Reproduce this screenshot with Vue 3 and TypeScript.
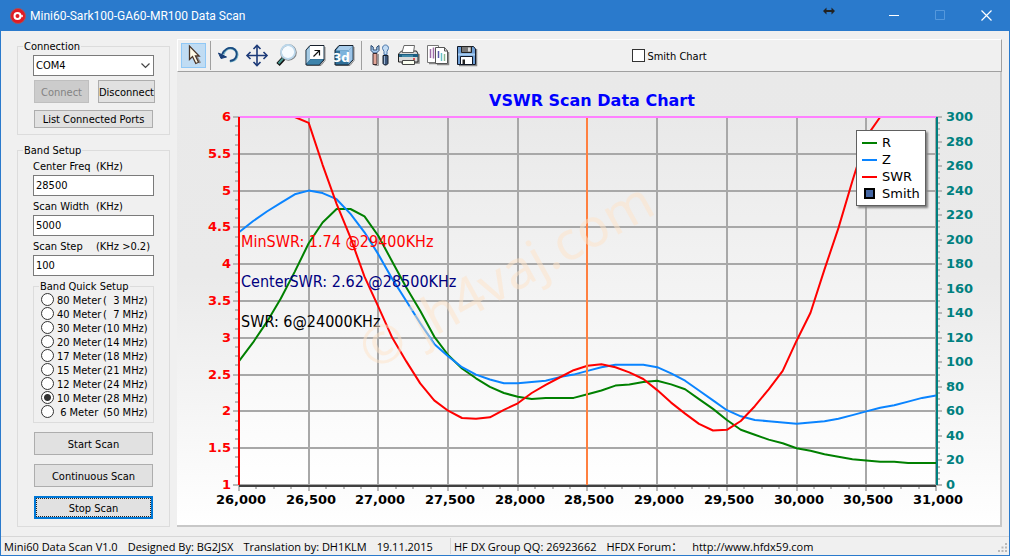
<script setup lang="ts">
import { computed, onBeforeUnmount, onMounted, ref } from 'vue'

interface Band {
  id: string
  name: string
  range: string
}

const port = ref('COM4')
const centerFreq = ref('28500')
const scanWidth = ref('5000')
const scanStep = ref('100')
const band = ref('10')
const smith = ref(false)

const bands: Band[] = [
  { id: '80', name: '80 Meter', range: '(  3 MHz)' },
  { id: '40', name: '40 Meter', range: '(  7 MHz)' },
  { id: '30', name: '30 Meter', range: '(10 MHz)' },
  { id: '20', name: '20 Meter', range: '(14 MHz)' },
  { id: '17', name: '17 Meter', range: '(18 MHz)' },
  { id: '15', name: '15 Meter', range: '(21 MHz)' },
  { id: '12', name: '12 Meter', range: '(24 MHz)' },
  { id: '10', name: '10 Meter', range: '(28 MHz)' },
  { id: '6', name: ' 6 Meter', range: '(50 MHz)' },
]

// One sample every 100 kHz, starting at 26,000 kHz.
const r = [
  101, 116, 133, 152, 174, 197, 214, 225, 225, 219, 203, 182, 161, 142, 121, 106, 95, 87, 80, 75, 72, 70, 71, 71, 71, 74,
  77, 81, 82, 84, 85, 82, 78, 70, 62, 53, 45, 41, 37, 34, 30, 28, 25, 23, 21, 20, 19, 19, 18, 18, 18,
]
const z = [
  206, 215, 223, 230, 237, 240, 238, 233, 221, 206, 188, 168, 150, 132, 115, 105, 96, 90, 86, 83, 83, 84, 85, 88, 90, 93,
  96, 98, 98, 98, 96, 91, 85, 77, 69, 61, 56, 53, 52, 51, 50, 51, 52, 54, 57, 60, 63, 65, 68, 71, 73,
]
const swrStart = 4
const swr = [
  6, 5.92, 5.35, 4.82, 4.36, 3.83, 3.42, 3, 2.68, 2.38, 2.15, 2.01, 1.91, 1.9, 1.92, 2.02, 2.11, 2.25, 2.36, 2.46, 2.56,
  2.62, 2.64, 2.6, 2.53, 2.44, 2.29, 2.12, 1.97, 1.83, 1.74, 1.75, 1.87, 2.07, 2.3, 2.55, 2.96, 3.34, 3.93, 4.49, 5.13,
  5.73, 6,
]

const chart = ref<SVGSVGElement | null>(null)
const size = ref({ w: 823, h: 453 })
let observer: ResizeObserver | undefined

onMounted(() => {
  const el = chart.value
  if (!el) return
  const measure = () => {
    const box = el.getBoundingClientRect()
    size.value = { w: Math.round(box.width), h: Math.round(box.height) }
  }
  measure()
  observer = new ResizeObserver(measure)
  observer.observe(el)
})
onBeforeUnmount(() => observer?.disconnect())

const area = computed(() => ({ l: 62, t: 45, r: size.value.w - 64, b: size.value.h - 40 }))
const px = (f: number) => area.value.l + f * (area.value.r - area.value.l)
const py = (f: number) => area.value.b - f * (area.value.b - area.value.t)
const column = (f: number) => Math.ceil(px(f) - 0.5)

const line = (values: number[], start: number, min: number, max: number) =>
  values
    .map((v, i) => `${px((i + start) / 50).toFixed(1)},${py((v - min) / (max - min)).toFixed(1)}`)
    .join(' ')

const rLine = computed(() => line(r, 0, 0, 300))
const zLine = computed(() => line(z, 0, 0, 300))
const swrLine = computed(() => line(swr, swrStart, 1, 6))

const xTicks = computed(() =>
  Array.from({ length: 41 }, (_, i) => ({
    at: column(i / 40),
    major: i % 4 === 0,
    text: (26000 + i * 125).toLocaleString('en-US'),
  })),
)
const leftTicks = computed(() =>
  Array.from({ length: 41 }, (_, i) => ({
    at: Math.round(py(i / 40)),
    major: i % 4 === 0,
    text: String(1 + i / 8),
  })),
)
const rightTicks = computed(() =>
  Array.from({ length: 61 }, (_, i) => ({
    at: Math.round(py(i / 60)),
    major: i % 4 === 0,
    text: String(i * 5),
  })),
)
const major = <T extends { major: boolean }>(ticks: T[]) => ticks.filter((t) => t.major)
const watermark = computed(() => {
  const x = Math.round(px(0.385))
  const y = Math.round(py(0.565))
  return `translate(${x} ${y}) rotate(-29)`
})
</script>

<template>
  <div class="window">
    <header class="titlebar">
      <svg class="app-icon" width="16" height="16" viewBox="0 0 16 16" aria-hidden="true">
        <circle cx="8" cy="8" r="7.5" fill="#e01b24" stroke="#a5545c" />
        <circle cx="7.5" cy="8" r="3" fill="none" stroke="#fff" stroke-width="2" />
        <path d="M10 8h3M12 6.8v2.4" stroke="#fff" stroke-width="1" />
      </svg>
      <h1>Mini60-Sark100-GA60-MR100 Data Scan</h1>
      <svg class="resize-arrow" width="12" height="8" viewBox="0 0 12 8" aria-hidden="true">
        <path d="M0 4 3.5.5V3h5V.5L12 4 8.5 7.5V5h-5v2.5z" fill="#222" />
      </svg>
      <button type="button" aria-label="Minimize">
        <svg width="11" height="11" viewBox="0 0 11 11"><path d="M0 5.5h10" stroke="#fff" /></svg>
      </button>
      <button type="button" aria-label="Maximize" disabled>
        <svg width="11" height="11" viewBox="0 0 11 11"><path d="M.5.5h9v9h-9z" fill="none" stroke="#5598dc" /></svg>
      </button>
      <button type="button" aria-label="Close">
        <svg width="11" height="11" viewBox="0 0 11 11"><path d="m.5.5 10 10m0-10-10 10" stroke="#fff" stroke-width="1.2" /></svg>
      </button>
    </header>

    <main>
      <aside>
        <fieldset>
          <legend>Connection</legend>
          <div class="group-body connection">
            <div class="select">
              <select v-model="port" aria-label="Port">
                <option>COM4</option>
              </select>
              <svg width="9" height="6" viewBox="0 0 9 6" aria-hidden="true">
                <path d="m.5.5 4 4 4-4" fill="none" stroke="#444" stroke-width="1.2" />
              </svg>
            </div>
            <div class="pair">
              <button type="button" class="btn connect" disabled>Connect</button>
              <button type="button" class="btn disconnect">Disconnect</button>
            </div>
            <button type="button" class="btn list">List Connected Ports</button>
          </div>
        </fieldset>

        <fieldset>
          <legend>Band Setup</legend>
          <div class="group-body">
            <label class="field">
              <span>Center Freq</span><span>(KHz)</span>
              <input v-model="centerFreq" type="text" />
            </label>
            <label class="field">
              <span>Scan Width</span><span>(KHz)</span>
              <input v-model="scanWidth" type="text" />
            </label>
            <label class="field">
              <span>Scan Step</span><span>(KHz &gt;0.2)</span>
              <input v-model="scanStep" type="text" />
            </label>
            <fieldset class="quick">
              <legend>Band Quick Setup</legend>
              <label v-for="b in bands" :key="b.id" class="band">
                <input v-model="band" type="radio" name="band" :value="b.id" />
                <span>{{ b.name }}</span>
                <span>{{ b.range }}</span>
              </label>
            </fieldset>
            <div class="actions">
              <button type="button" class="btn">Start Scan</button>
              <button type="button" class="btn">Continuous Scan</button>
              <button type="button" class="btn focused">Stop Scan</button>
            </div>
          </div>
        </fieldset>
      </aside>

      <section class="work">
        <div class="toolbar" role="toolbar" aria-label="Chart tools">
          <button type="button" class="tool active" aria-label="Select">
            <svg viewBox="0 0 25 25">
              <path d="M15 14l3.500 6.500 1.500-1-3-5.500z" fill="#8c8c90" />
              <path d="M8.500 3v13.500l3-3 3.300 7 2.700-1.200-3-6.300h3.700z" fill="#fffbe8" stroke="#4a3528" stroke-width="1.300" />
            </svg>
          </button>
          <span class="sep"></span>
          <button type="button" class="tool" aria-label="Undo">
            <svg viewBox="0 0 25 25">
              <path d="M7 11.500C9 6.500 13 4.500 17 5.700c3.700 1.300 5.200 5.200 3.500 8.800-1.300 2.400-3.500 3.700-6.500 3.700" fill="none" stroke="#6fb0c4" stroke-width="2.600" />
              <path d="M6 11.500C8 6.200 12.500 4 16.500 5.200c3.800 1.300 5.200 5.300 3.600 8.800-1.300 2.500-3.500 3.800-6.300 3.800" fill="none" stroke="#1b4a80" stroke-width="1.800" />
              <path d="M2.500 10 10.500 14 5 15.500z" fill="#1b3f78" stroke="#1b3f78" />
            </svg>
          </button>
          <button type="button" class="tool" aria-label="Move">
            <svg viewBox="0 0 25 25">
              <path d="M12 3v19M2.500 12.500h19" stroke="#1c3a78" stroke-width="1.600" />
              <path d="m8.500 6 3.500-3.500L15.500 6m-7 13 3.500 3.500 3.500-3.500M5.500 9 2 12.500 5.500 16m13-7 3.500 3.500-3.500 3.500" fill="none" stroke="#1c3a78" stroke-width="1.600" />
            </svg>
          </button>
          <button type="button" class="tool" aria-label="Zoom">
            <svg viewBox="0 0 25 25">
              <path d="m10 15-6 6.500" stroke="#111" stroke-width="4.500" />
              <path d="m9 15.500-4.500 5" stroke="#4c9a94" stroke-width="2" />
              <circle cx="14.500" cy="9.500" r="7.500" fill="#f6fbff" stroke="#808488" stroke-width="1.600" />
              <circle cx="14" cy="9" r="7" fill="none" stroke="#bcd8ec" stroke-width="1.800" />
            </svg>
          </button>
          <button type="button" class="tool" aria-label="Depth">
            <svg viewBox="0 0 25 25">
              <path d="M4 22.500h14l4-5V4" fill="none" stroke="#888" />
              <path d="M7 2.500 3 7v15h13.500l4.500-5V2.500z" fill="#2d6488" stroke="#17202c" />
              <path d="M3.500 7 7 3.500v13l-3.500 4z" fill="#a7cbe4" />
              <path d="M3.500 21.500 7.500 16.500h12.500l-4 5z" fill="#3e84ac" />
              <path d="M7 3h13.500v13H7z" fill="#fff" />
              <path d="M10.500 13.500 16 8M11.500 7.500h5v5" fill="none" stroke="#111" stroke-width="1.200" />
            </svg>
          </button>
          <button type="button" class="tool" aria-label="3D view">
            <svg viewBox="0 0 25 25">
              <path d="M4 22.500h14l4-5V4" fill="none" stroke="#888" />
              <path d="M7 2.500 3 7v15h13.500l4.500-5V2.500z" fill="#2f6f98" stroke="#17202c" />
              <path d="M7.500 3h13l-4 4.500H4z" fill="#a9cdec" />
              <path d="M8 7.500h8.500v9H8z" fill="#7db3dc" />
              <path d="M20.500 3v13.500l-4 4.500V7.500z" fill="#9cc4e8" />
              <text x="1" y="19" class="badge">3d</text>
            </svg>
          </button>
          <span class="sep"></span>
          <button type="button" class="tool" aria-label="Options">
            <svg viewBox="0 0 25 25">
              <path d="M4 2.500v5L6.500 10h3L12 7.500v-5L9.800 4v3H6.200V4z" fill="#a9cdf0" stroke="#27466e" />
              <path d="M6 10.500h4v11H6z" fill="#e2a596" stroke="#3c2c30" />
              <path d="M11.500 11v11.500h-4" fill="none" stroke="#999" />
              <path d="M18.500 2c2 0 3 1.500 3 3.500l-1.500 3v3h-3v-3l-1.500-3c0-2 1-3.500 3-3.500z" fill="#c3dcf4" stroke="#4a75a8" />
              <path d="M16 12.500h5v8l-1.500 1.500h-2L16 20.500z" fill="#3d577c" stroke="#18202c" />
              <path d="M17.500 13v8" stroke="#9ab4d2" />
            </svg>
          </button>
          <button type="button" class="tool" aria-label="Print">
            <svg viewBox="0 0 25 25">
              <path d="M5 20h18v-9" fill="none" stroke="#888" stroke-width="1.500" />
              <path d="M2.500 11 5.500 8h15l1.500 3v8h-19.500z" fill="#d9d9d9" stroke="#222" />
              <path d="M6 9.500 8 2.500h10.500l-1 7z" fill="#fff" stroke="#666" />
              <path d="M3 12.500h19" stroke="#1c5d80" stroke-width="3" />
              <path d="M6 13h11" stroke="#63b4cf" />
              <path d="M6.500 17.500h12v4h-12z" fill="#fafff0" stroke="#444" />
              <path d="M17 16h2" stroke="#d22" stroke-width="1.500" />
            </svg>
          </button>
          <button type="button" class="tool" aria-label="Pages">
            <svg viewBox="0 0 25 25">
              <path d="M4 20.500h8M23.500 9v12.500H12" fill="none" stroke="#888" stroke-width="1.500" />
              <path d="M2.500 2.500h11v17h-11z" fill="#fff" stroke="#777" />
              <path d="M5.500 6v9M8.500 4.500v11" stroke="#a06ca8" stroke-width="1.500" />
              <path d="M10.500 4.500h9l3 3.500v12.500h-12z" fill="#fff" stroke="#555" />
              <path d="M19.500 4.500V8h3" fill="none" stroke="#555" />
              <path d="M13.500 8v7" stroke="#5a58a8" stroke-width="1.500" />
              <path d="M16.500 10v8" stroke="#67c0c8" stroke-width="1.500" />
              <path d="M19.500 11v7" stroke="#8cb890" stroke-width="1.500" />
            </svg>
          </button>
          <button type="button" class="tool" aria-label="Save">
            <svg viewBox="0 0 25 25">
              <path d="M5 22.500h17.500V6" fill="none" stroke="#888" stroke-width="1.500" />
              <path d="M3.500 3.500h16L21.500 6v15.500h-18z" fill="#6f9fd6" stroke="#101828" />
              <path d="M4 11.500h17" stroke="#a9cdf0" stroke-width="2" />
              <path d="M7.500 3.500h10v6h-10z" fill="#777" stroke="#222" />
              <path d="M14 4.500h2.500v4H14z" fill="#ddd" />
              <path d="M6.500 13.500h12v8h-12z" fill="#fff" stroke="#101828" />
              <path d="M8.500 16.500h2.500v4.500H8.500z" fill="#222" />
            </svg>
          </button>
          <label class="smith">
            <input v-model="smith" type="checkbox" />
            <span>Smith Chart</span>
          </label>
        </div>

        <div class="plot">
          <svg ref="chart" class="chart" role="img" aria-label="VSWR Scan Data Chart">
            <defs>
              <linearGradient id="wall" x1="0" y1="0" x2="0" y2="1">
                <stop offset="0" stop-color="#e9e9e9" />
                <stop offset="1" stop-color="#ffffff" />
              </linearGradient>
            </defs>
            <rect :x="area.l" :y="area.t" :width="area.r - area.l" :height="area.b - area.t" fill="url(#wall)" />
            <text class="title" :x="Math.round(size.w / 2) + 3" y="34">VSWR Scan Data Chart</text>

            <g stroke="#a8a8a8" stroke-width="2">
              <line v-for="t in major(xTicks)" :key="`gx${t.at}`" :x1="t.at" :x2="t.at" :y1="area.t" :y2="area.b" />
              <line v-for="t in major(leftTicks)" :key="`gy${t.at}`" :x1="area.l" :x2="area.r" :y1="t.at" :y2="t.at" />
            </g>
            <g stroke="#b8b8b8" stroke-width="2">
              <line v-for="t in xTicks" :key="`tx${t.at}`" :x1="t.at" :x2="t.at" :y1="area.b" :y2="area.b + (t.major ? 6 : 4)" />
              <line v-for="t in leftTicks" :key="`tl${t.at}`" :x1="area.l - (t.major ? 6 : 4)" :x2="area.l" :y1="t.at" :y2="t.at" />
              <line v-for="t in rightTicks" :key="`tr${t.at}`" :x1="area.r" :x2="area.r + (t.major ? 6 : 4)" :y1="t.at" :y2="t.at" />
            </g>

            <g fill="none" stroke-width="2" stroke-linejoin="round">
              <polyline :points="rLine" stroke="#008000" />
              <polyline :points="zLine" stroke="#0a84ff" />
              <polyline :points="swrLine" stroke="#ff0000" />
            </g>

            <g stroke-width="2">
              <line :x1="area.l" :x2="area.r" :y1="area.b + 1" :y2="area.b + 1" stroke="#404040" />
              <line :x1="column(0.5)" :x2="column(0.5)" :y1="area.t" :y2="area.b" stroke="#ff8040" />
              <line :x1="area.l" :x2="area.r" :y1="area.t" :y2="area.t" stroke="#ff80ff" />
              <line :x1="area.l" :x2="area.l" :y1="area.t" :y2="area.b" stroke="#ff0000" />
              <line :x1="area.r + 1" :x2="area.r + 1" :y1="area.t" :y2="area.b" stroke="#008080" />
            </g>

            <text v-for="t in major(xTicks)" :key="`lx${t.at}`" class="tick mid" :x="t.at + 2" :y="area.b + 19">{{ t.text }}</text>
            <text v-for="t in major(leftTicks)" :key="`ll${t.at}`" class="tick left" :x="area.l - 8" :y="t.at + 4">{{ t.text }}</text>
            <text v-for="t in major(rightTicks)" :key="`lr${t.at}`" class="tick right" :x="area.r + 10" :y="t.at + 4">{{ t.text }}</text>

            <text class="note min" :x="area.l + 2" :y="area.t + 130">MinSWR: 1.74 @29400KHz</text>
            <text class="note center" :x="area.l + 2" :y="area.t + 170">CenterSWR: 2.62 @28500KHz</text>
            <text class="note" :x="area.l + 2" :y="area.t + 210">SWR: 6@24000KHz</text>

            <text class="watermark" :transform="watermark" y="17">© jh4vaj.com</text>
          </svg>

          <ul class="key">
            <li><i class="stroke r"></i>R</li>
            <li><i class="stroke z"></i>Z</li>
            <li><i class="stroke swr"></i>SWR</li>
            <li><i class="box"></i>Smith</li>
          </ul>
        </div>
      </section>
    </main>

    <footer>
      <p class="about">
        <span>Mini60 Data Scan V1.0</span>
        <span>Designed By: BG2JSX</span>
        <span>Translation by: DH1KLM</span>
        <span>19.11.2015</span>
      </p>
      <p class="contact">
        <span>HF DX Group QQ: 26923662</span>
        <span>HFDX Forum：</span>
        <span>http://www.hfdx59.com</span>
      </p>
      <svg class="grip" width="10" height="10" viewBox="0 0 10 10" aria-hidden="true">
        <path d="M7 0h2v2H7zM3.500 3.500h2v2h-2zM7 3.500h2v2H7zM0 7h2v2H0zM3.500 7h2v2h-2zM7 7h2v2H7z" fill="#b8b8b8" />
      </svg>
    </footer>
  </div>
</template>

<style>
body {
  background: #f0f0f0;
}
</style>

<style scoped>
.window {
  box-sizing: border-box;
  display: flex;
  flex-direction: column;
  min-height: 100vh;
  border: 1px solid #2a7acc;
  border-top: 0;
  background: #f0f0f0;
  color: #000;
  font: 11px/14px 'DejaVu Sans Condensed', 'DejaVu Sans', sans-serif;
}

button,
input,
select {
  box-sizing: border-box;
  margin: 0;
  font: inherit;
  color: inherit;
}

/* Title bar */
.titlebar {
  display: flex;
  align-items: center;
  height: 31px;
  padding-left: 9px;
  background: #2a7acc;
  color: #fff;
}
.titlebar h1 {
  flex: 1;
  margin: 0 0 0 4px;
  font: 12px/16px Roboto, 'Open Sans', sans-serif;
}
.resize-arrow {
  align-self: flex-start;
  margin: 7px 36px 0 0;
}
.titlebar button {
  display: flex;
  align-items: center;
  justify-content: center;
  width: 46px;
  height: 31px;
  padding: 0;
  border: 0;
  background: none;
}

main {
  display: flex;
  flex: 1;
  padding: 8px 7px 9px 16px;
}
aside {
  display: flex;
  flex-direction: column;
  gap: 8px;
  width: 153px;
  margin-right: 7px;
}
fieldset {
  min-width: 0;
  margin: 0;
  padding: 0;
  border: 1px solid #dcdcdc;
}
legend {
  height: 14px;
  margin-left: 5px;
  padding: 0 1px;
  line-height: 16px;
}
.group-body {
  display: flex;
  flex-direction: column;
  gap: 3px;
  padding: 2px 15px 7px;
}
.connection {
  padding-bottom: 6px;
  gap: 0;
}

.select {
  position: relative;
}
.select select {
  display: block;
  width: 100%;
  height: 21px;
  padding: 0 2px;
  border: 1px solid #7a7a7a;
  border-radius: 0;
  background: #fff;
  appearance: none;
}
.select svg {
  position: absolute;
  top: 8px;
  right: 4px;
  pointer-events: none;
}

.btn {
  height: 23px;
  padding: 2px 0 0;
  border: 1px solid #adadad;
  background: #e1e1e1;
  text-align: center;
  white-space: nowrap;
}
.btn:disabled {
  border-color: #bfbfbf;
  background: #cccccc;
  color: #838383;
}
.pair {
  display: flex;
  gap: 9px;
  margin: 4px 0 7px 1px;
}
.connect {
  flex: 0 0 55px;
}
.disconnect {
  flex: 0 0 57px;
}
.list {
  height: 18px;
  margin: 0 1px;
}

.field {
  display: grid;
  grid-template-rows: 14px 21px;
  grid-template-columns: 63px 1fr;
  row-gap: 2px;
  line-height: 16px;
  white-space: nowrap;
}
.field input {
  grid-column: 1 / -1;
  width: 100%;
  height: 21px;
  padding: 0 2px;
  border: 1px solid #7a7a7a;
  background: #fff;
}

.quick {
  padding-bottom: 3px;
}
.band {
  display: grid;
  grid-template-columns: 16px 46px 1fr;
  height: 14px;
  padding-left: 7px;
  line-height: 16px;
  white-space: pre;
}
.band input {
  appearance: none;
  width: 13px;
  height: 13px;
  border: 1px solid #333;
  border-radius: 50%;
  background: #fff;
}
.band input:checked {
  background: radial-gradient(circle, #333 0 3px, #fff 4px);
}

.actions {
  display: grid;
  gap: 9px;
  padding: 6px 1px 0;
}
.focused {
  border: 2px solid #0078d7;
  outline: 1px dotted #222;
  outline-offset: -3px;
}

/* Chart side */
.work {
  display: flex;
  flex: 1;
  flex-direction: column;
  min-width: 0;
}
.toolbar {
  display: flex;
  align-items: center;
  gap: 4px;
  box-sizing: border-box;
  height: 33px;
  padding-left: 3px;
  border: 1px solid #fff;
  border-right-color: #a0a0a0;
  border-bottom-color: #a0a0a0;
}
.tool {
  width: 25px;
  height: 25px;
  padding: 0;
  border: 0;
  background: none;
}
.tool.active {
  background: #c0dcf3;
  box-shadow: inset 0 0 0 1px #90c8f6;
}
.tool svg {
  display: block;
  width: 25px;
  height: 25px;
}
.badge {
  fill: #fff;
  font: bold 12px 'DejaVu Sans', sans-serif;
}
.sep {
  width: 1px;
  height: 29px;
  margin-right: 1px;
  background: #a0a0a0;
}
.smith {
  display: flex;
  align-items: center;
  gap: 2px;
  margin: 0 auto;
  padding-right: 145px;
}
.smith span {
  padding-top: 2px;
}
.smith input {
  appearance: none;
  width: 13px;
  height: 13px;
  border: 1px solid #333;
  background: #fff;
}

.plot {
  position: relative;
  display: flex;
  flex: 1;
  flex-direction: column;
  border: solid #c8c8c8;
  border-width: 0 2px 2px 0;
  background: linear-gradient(#e9e9e9 0%, #eaeaea 45%, #ffffff 100%);
}
.chart {
  flex: 1;
  display: block;
  width: 100%;
  height: 0;
  min-height: 340px;
}
.chart text {
  font-family: 'DejaVu Sans', sans-serif;
}
.chart .title {
  fill: #0000ff;
  font-size: 16px;
  font-weight: bold;
  text-anchor: middle;
}
.chart .tick {
  font-size: 13px;
  font-weight: bold;
}
.tick.mid {
  text-anchor: middle;
}
.tick.left {
  fill: #ff0000;
  text-anchor: end;
}
.tick.right {
  fill: #008080;
}
.chart .note {
  font-family: 'DejaVu Sans Condensed', 'DejaVu Sans', sans-serif;
  font-size: 16px;
}
.note.min {
  fill: #ff0000;
}
.note.center {
  fill: #000080;
}
.chart .watermark {
  fill: #ffe4c8;
  opacity: 0.5;
  font-family: 'Noto Sans', sans-serif;
  font-size: 53px;
  text-anchor: middle;
}

.key {
  position: absolute;
  top: 58px;
  right: 74px;
  width: 68px;
  margin: 0;
  padding: 3px 0;
  border: 1px solid #606060;
  background: #fff;
  box-shadow: 2px 2px 2px #808080;
  font: 13px/17px 'DejaVu Sans', sans-serif;
  list-style: none;
}
.key li {
  display: flex;
  align-items: center;
}
.key i {
  flex: none;
  box-sizing: border-box;
}
.stroke {
  width: 15px;
  height: 2px;
  margin: 0 5px;
}
.stroke.r {
  background: #008000;
}
.stroke.z {
  background: #0a84ff;
}
.stroke.swr {
  background: #ff0000;
}
.box {
  width: 11px;
  height: 11px;
  margin: 0 7px;
  border: 2px solid #000;
  background: #4466a3;
}

/* Status bar */
footer {
  display: flex;
  height: 18px;
  border-top: 1px solid #d7d7d7;
  font: 11px/18px 'Open Sans', 'Noto Sans', 'Noto Sans CJK SC', sans-serif;
  white-space: nowrap;
}
footer p {
  display: flex;
  gap: 10px;
  height: 16px;
  margin: 1px 0;
  padding-left: 3px;
}
.about {
  width: 446px;
  border-right: 1px solid #d7d7d7;
}
.contact {
  flex: 1;
}
.grip {
  align-self: flex-end;
  margin: 0 1px 2px 0;
}
</style>
